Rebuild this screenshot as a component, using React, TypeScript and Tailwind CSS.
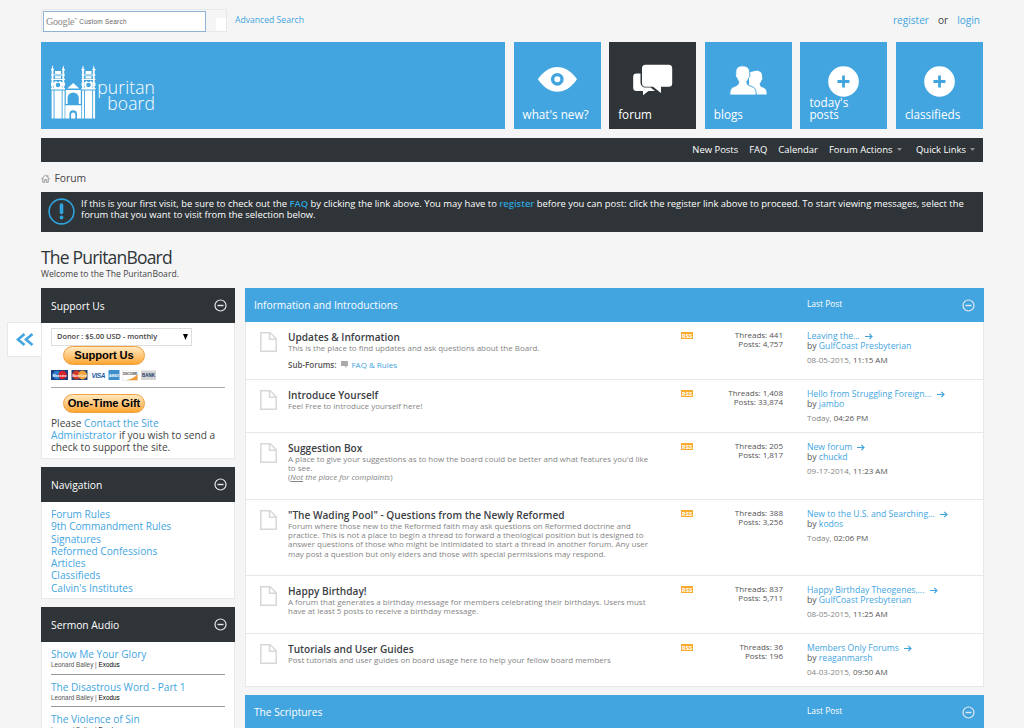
import React from 'react';

interface Forum {
  title: string;
  desc: React.ReactNode;
  sub?: string;
  threads: string;
  posts: string;
  last: string;
  by: string;
  date: string;
  time: string;
  size: string;
}

const forums: Forum[] = [
  { title: 'Updates & Information', desc: 'This is the place to find updates and ask questions about the Board.', sub: 'FAQ & Rules', threads: '441', posts: '4,757', last: 'Leaving the...', by: 'GulfCoast Presbyterian', date: '08-05-2015,', time: '11:15 AM', size: 'h-[58px]' },
  { title: 'Introduce Yourself', desc: 'Feel Free to introduce yourself here!', threads: '1,408', posts: '33,874', last: 'Hello from Struggling Foreign...', by: 'jambo', date: 'Today,', time: '04:26 PM', size: 'h-[53px]' },
  {
    title: 'Suggestion Box',
    desc: (
      <>
        A place to give your suggestions as to how the board could be better and what features you'd like<br />to see.<br />
        (<i><u>Not</u> the place for complaints</i>)
      </>
    ),
    threads: '205', posts: '1,817', last: 'New forum', by: 'chuckd', date: '09-17-2014,', time: '11:23 AM', size: 'h-[67px]',
  },
  {
    title: '"The Wading Pool" - Questions from the Newly Reformed',
    desc: (
      <>
        Forum where those new to the Reformed faith may ask questions on Reformed doctrine and<br />
        practice. This is not a place to begin a thread to forward a theological position but is designed to<br />
        answer questions of those who might be intimidated to start a thread in another forum. Any user<br />
        may post a question but only elders and those with special permissions may respond.
      </>
    ),
    threads: '388', posts: '3,256', last: 'New to the U.S. and Searching...', by: 'kodos', date: 'Today,', time: '02:06 PM', size: 'h-[76px]',
  },
  {
    title: 'Happy Birthday!',
    desc: (
      <>
        A forum that generates a birthday message for members celebrating their birthdays. Users must<br />
        have at least 5 posts to receive a birthday message.
      </>
    ),
    threads: '837', posts: '5,711', last: 'Happy Birthday Theogenes,...', by: 'GulfCoast Presbyterian', date: '08-05-2015,', time: '11:25 AM', size: 'h-[58px]',
  },
  { title: 'Tutorials and User Guides', desc: 'Post tutorials and user guides on board usage here to help your fellow board members', threads: '36', posts: '196', last: 'Members Only Forums', by: 'reaganmarsh', date: '04-03-2015,', time: '09:50 AM', size: 'h-[53px]' },
];

const navLinks = ['Forum Rules', '9th Commandment Rules', 'Signatures', 'Reformed Confessions', 'Articles', 'Classifieds', "Calvin's Institutes"];
const sermons = ['Show Me Your Glory', 'The Disastrous Word - Part 1', 'The Violence of Sin'];

const Collapse = () => (
  <svg width="13" height="13" viewBox="0 0 13 13" fill="none" stroke="#e4eaee">
    <circle cx="6.5" cy="6.5" r="5.5" strokeWidth="1.2" />
    <path d="M3.5 6.5h6" strokeWidth="1.4" />
  </svg>
);

const Arrow = () => (
  <svg className="ml-[3px] inline-block align-[-1px]" width="8" height="7" viewBox="0 0 8 7" fill="none" stroke="#43a5df" strokeWidth="1.2">
    <path d="M0 3.5h7M4.3.8 7 3.5 4.3 6.2" />
  </svg>
);

const Doc = () => (
  <svg width="17" height="20" viewBox="0 0 17 20" fill="none" stroke="#d8d8d8" strokeWidth="1.5">
    <path d="M.8.8h9.4l6 6v12.4H.8zM9.5 1v6.3H16" />
  </svg>
);

const Church = () => (
  <svg width="45" height="55" viewBox="0 0 45 55" fill="#fff">
    {[0, 30.5].map(x => (
      <g key={x} transform={`translate(${x} 0)`}>
        <path d="M1.5 0 2.4 4V24H.6V4zM12.3 0l.9 4V24h-1.8V4z" />
        <path d="M0 4h3v1.3H0zM11 4h3v1.3h-3zM4 6h6v3H4zM0 9.5h14v1H0zM4 11.2h6v2.3H4zM0 14h14v1H0zM4.2 16h1.5v2H4.2zM8.3 16h1.5v2H8.3zM0 17.8h3v3H0zM11 17.8h3v3h-3z" />
        <path d="M3 17h8v6H3zM0 23h14v1.6H0z" />
        <circle cx="7" cy="20" r="2.3" fill="#43a5df" />
        <path d="M.6 25.5h2v28H.6zM3.5 25.5h7.2v28H3.5zM11.6 25.5h2v28h-2z" />
      </g>
    ))}
    <path d="M22.2 18l6.1 5.5h-12z" />
    <path fillRule="evenodd" d="M14.8 25h15v14h-15zm1.8 14h11.2v-6a5.6 5.6 0 0 0-11.2 0z" />
    <path fillRule="evenodd" d="M14.3 40.3h16v13.2H26V49a3.8 3.8 0 0 0-7.6 0v4.5h-4.1z" />
    <path d="M20.1 53.5v-4a2.1 2.1 0 0 1 4.2 0v4z" />
  </svg>
);

const EyeIcon = () => (
  <svg className="absolute left-[23px] top-[24px]" width="41" height="27" viewBox="0 0 41 27">
    <path d="M.8 13.3C7 4.8 13 1 20.3 1S34 4.8 40 13.3C34 21.8 27.5 25.8 20.3 25.8S7 21.8.8 13.3z" fill="#fff" />
    <circle cx="20.3" cy="13.3" r="4.7" fill="none" stroke="#43a5df" strokeWidth="3.4" />
  </svg>
);

const ChatIcon = () => (
  <svg className="absolute left-[24px] top-[22px]" width="41" height="33" viewBox="0 0 41 33" fill="#fff">
    <path d="M3.5 9.5h4V18c0 3.5 2 5.6 5.5 5.6h4.600l4.400 3.400h-6.500L10 31.300V27H3.500A3.300 3.300 0 0 1 .2 23.700V12.800A3.300 3.300 0 0 1 3.500 9.500z" />
    <path d="M12.5.8h23.200a3.500 3.500 0 0 1 3.500 3.500v14.900a3.500 3.500 0 0 1-3.500 3.500H28V29l-8-6.300h-7.500A3.500 3.500 0 0 1 9 19.200V4.300A3.500 3.500 0 0 1 12.500.8z" />
  </svg>
);

const PeopleIcon = () => (
  <svg className="absolute left-[24px] top-[23px]" width="40" height="31" viewBox="0 0 40 31" fill="#fff">
    <path d="M27.5 5.8c4.6 0 6 3 5.6 6.7.6 1 0 2.6-.8 2.900-.3 1.500-.9 2.300-1.600 3 .1 3 1.800 3.500 3.800 4.400 2.400 1 3.200 2.500 3.200 6.800H20V6.800c2 1 4-1 7.500-1z" />
    <path d="M13.5.8c5.6 0 7.600 3.500 7.200 8.400.7 1.200 0 3.200-1 3.700-.4 1.700-1 2.800-1.900 3.600.1 3.600 2.200 4 5 5.100 3.300 1.200 4.400 3 4.400 8.500H.8c0-5.500 1.200-7.300 4.200-8.500 2.800-1.100 4.700-1.500 4.700-5.100-.9-.8-1.500-1.900-1.900-3.600-1-.5-1.600-2.500-1-3.700C6.300 4.300 8 .8 13.500.8z" stroke="#43a5df" strokeWidth="1" />
  </svg>
);

const PlusIcon = () => (
  <svg className="absolute left-[28px] top-[24px]" width="31" height="31" viewBox="0 0 31 31">
    <circle cx="15.5" cy="15.5" r="15.3" fill="#fff" />
    <path d="M15.5 9.5v12M9.5 15.5h12" stroke="#43a5df" strokeWidth="2.8" />
  </svg>
);

function Tile({ label, icon, active }: { label: React.ReactNode; icon: React.ReactNode; active?: boolean }) {
  return (
    <div className={`relative flex h-[87px] w-[87px] items-end pb-[9px] pl-[9px] text-[11.7px] leading-[12px] text-white ${active ? 'bg-[#2e3438]' : 'bg-[#43a5df]'}`}>
      {icon}
      <span className="relative">{label}</span>
    </div>
  );
}

function SideBlock({ title, children, className = '' }: { title: string; children: React.ReactNode; className?: string }) {
  return (
    <section className={`flex flex-col ${className}`}>
      <header className="flex h-[35px] shrink-0 items-center justify-between bg-[#2e3438] pl-[10px] pr-[8px] text-[10.3px] text-white">
        <span className="pt-[2px]">{title}</span>
        <Collapse />
      </header>
      <div className="flex-1 border border-t-0 border-[#e8e8e8] bg-white px-[9px]">{children}</div>
    </section>
  );
}

function CategoryHead({ title }: { title: string }) {
  return (
    <header className="flex h-[34px] items-center bg-[#43a5df] pl-[9px] pr-[9px] text-white">
      <span className="w-[553px] pt-[2px] text-[10.2px]">{title}</span>
      <span className="flex-1 pb-px text-[8.4px]">Last Post</span>
      <Collapse />
    </header>
  );
}

function ForumRow({ forum }: { forum: Forum }) {
  return (
    <div className={`flex border-b border-[#e8e8e8] pl-[14px] pt-[10px] text-[8px] leading-[9.4px] text-[#555] ${forum.size}`}>
      <div className="w-[28px]"><Doc /></div>
      <div className="w-[393px] whitespace-nowrap text-[#858585]">
        <h3 className="-mt-px text-[10.1px] font-semibold leading-[12px] text-[#3b4044]">{forum.title}</h3>
        <p className="-mt-[0.4px] text-[7.97px]">{forum.desc}</p>
        {forum.sub && (
          <p className="mt-[8px] flex items-center text-[#555]">
            <span className="font-semibold">Sub-Forums:</span>
            <svg className="ml-[5px] mr-[3px]" width="7" height="7" viewBox="0 0 7 7" fill="#aaa"><path d="M0 0h7v5H5.5v2l-2-2H0z" /></svg>
            <span className="text-[#43a5df]">{forum.sub}</span>
          </p>
        )}
      </div>
      <div className="w-[12px]">
        <div className="flex h-[7px] items-center justify-center bg-[#fbaa30] text-[6px] font-bold leading-none text-white">RSS</div>
      </div>
      <div className="-mt-[2px] w-[90px] text-right">
        <p>Threads: {forum.threads}</p>
        <p>Posts: {forum.posts}</p>
      </div>
      <div className="-mt-[1.5px] ml-[24px] whitespace-nowrap text-[8.65px] leading-[10px]">
        <p className="text-[#43a5df]">{forum.last} <Arrow /></p>
        <p>by <span className="text-[#43a5df]">{forum.by}</span></p>
        <p className="mt-[4.5px] text-[8px]"><span className="text-[#858585]">{forum.date}</span> {forum.time}</p>
      </div>
    </div>
  );
}

const PayButton = ({ label }: { label: string }) => (
  <div className="ml-[12px] flex h-[19px] w-[82px] items-center justify-center whitespace-nowrap rounded-full border border-[#f0a040] bg-gradient-to-b from-[#ffe9bd] to-[#fda62a] font-['Liberation_Sans',sans-serif] text-[11.2px] font-bold tracking-[-0.1px] text-black">
    {label}
  </div>
);

const Cards = () => (
  <svg className="mt-[5px] block" width="106" height="11" viewBox="0 0 106 11" fontFamily="Liberation Sans, sans-serif" fontWeight="bold">
    <path d="M0 0h17v10H0z" fill="#173f82" />
    <circle cx="6" cy="5" r="4.2" fill="#2b80cc" />
    <circle cx="11.5" cy="5" r="4.2" fill="#d8202a" />
    <text x="1.5" y="6.5" fontSize="4" fill="#fff" textLength="14" lengthAdjust="spacingAndGlyphs">Maestro</text>
    <path d="M20.5 0h16v10h-16z" fill="#26406f" />
    <circle cx="25.5" cy="5" r="4.4" fill="#d33a2c" />
    <circle cx="31.5" cy="5" r="4.4" fill="#f2a23a" />
    <text x="21.5" y="6.5" fontSize="4" fill="#fff" textLength="14" lengthAdjust="spacingAndGlyphs">MasterCard</text>
    <text x="40.5" y="7.5" fontSize="6.5" fontStyle="italic" fill="#1d5aa0" textLength="14">VISA</text>
    <path d="M57.5 0h11v10h-11z" fill="#3b8fca" />
    <text x="58" y="6.5" fontSize="4" fill="#fff" textLength="10" lengthAdjust="spacingAndGlyphs">AMEX</text>
    <path d="M71.5.3h15v10h-15z" fill="#fff" stroke="#ddd" strokeWidth=".5" />
    <path d="M75 10.3c5-1 9-3 11.5-6v6z" fill="#f09a3c" />
    <text x="72" y="4.8" fontSize="4" fill="#333" textLength="14" lengthAdjust="spacingAndGlyphs">DISCOVER</text>
    <path d="M90 .5h15V10H90z" fill="#d4d4d4" />
    <text x="91" y="7" fontSize="5" fill="#223a66" textLength="13" lengthAdjust="spacingAndGlyphs">BANK</text>
  </svg>
);

const Caret = () => (
  <svg className="ml-[4px] inline-block align-[2px]" width="5" height="3" viewBox="0 0 5 3" fill="#8b9094"><path d="M0 0h5L2.5 3z" /></svg>
);

export default function App() {
  return (
    <div className="relative h-[728px] w-[1024px] overflow-hidden bg-[#f5f5f5] pl-[41px] font-['Open_Sans','Noto_Sans',sans-serif] text-[#444]">
      <div className="flex h-[42px] w-[942px] items-start pt-[9px]">
        <div className="flex h-[23px] w-[186px] items-end border border-[#e8e8e8] pl-px">
          <div className="-mb-px flex h-[21px] w-[163px] items-center border border-[#8fb2d6] bg-white pl-[2px] text-[#888]">
            <span className="font-['Liberation_Serif',serif] text-[10px] tracking-[-0.2px]">Google</span>
            <span className="mb-[4px] text-[4px]">™</span>
            <span className="ml-[2px] font-['Liberation_Sans',sans-serif] text-[6.5px] tracking-[0.2px] text-[#666]">Custom Search</span>
          </div>
          <div className="ml-auto h-[13px] w-[10px] bg-white" />
        </div>
        <a className="ml-[8px] mt-[4px] text-[8.65px] leading-[14px] text-[#43a5df]">Advanced Search</a>
        <div className="ml-auto mr-[3px] mt-[4px] flex gap-[9px] text-[10.1px] leading-[14px] text-[#43a5df]">
          <a>register</a>
          <span className="text-[#444]">or</span>
          <a>login</a>
        </div>
      </div>

      <div className="flex w-[942px] justify-between">
        <div className="flex h-[87px] w-[464px] bg-[#43a5df] pl-[10px] pt-[23px] text-white">
          <Church />
          <div className="mt-[14px] w-[59px] text-right text-[17.5px] font-light leading-[16px] tracking-[0.1px]">puritan<br />board</div>
        </div>
        <Tile label="what's new?" icon={<EyeIcon />} />
        <Tile label="forum" icon={<ChatIcon />} active />
        <Tile label="blogs" icon={<PeopleIcon />} />
        <Tile label={<>today's<br />posts</>} icon={<PlusIcon />} />
        <Tile label="classifieds" icon={<PlusIcon />} />
      </div>

      <nav className="mt-[8.5px] flex h-[24.5px] w-[942px] items-center justify-end bg-[#2e3438] pr-[8px] text-[9.45px] text-white">
        <span>New Posts</span>
        <span className="ml-[11px]">FAQ</span>
        <span className="ml-[11px]">Calendar</span>
        <span className="ml-[11px]">Forum Actions<Caret /></span>
        <span className="ml-[14.5px]">Quick Links<Caret /></span>
      </nav>

      <div className="flex h-[29.5px] items-center pt-[3px] text-[10.3px]">
        <svg className="mr-[4.5px]" width="9" height="9" viewBox="0 0 9 9" fill="none" stroke="#999"><path d="M.3 5 4.5 1l4.2 4M1.8 4v4.3h1.9V5.5h1.6v2.8h1.9V4M6.8 1v2" /></svg>
        Forum
      </div>

      <div className="flex h-[40.5px] w-[942px] bg-[#2e3438] pl-[7px] pt-[6px] text-[9.42px] leading-[11px] text-white">
        <svg className="mr-[6px] shrink-0" width="27" height="27" viewBox="0 0 27 27" fill="none" stroke="#2fa3dc">
          <circle cx="13.5" cy="13.5" r="12.4" strokeWidth="1.6" />
          <path d="M13.5 7v7.5" strokeWidth="3.6" strokeLinecap="round" />
          <circle cx="13.5" cy="19.5" r="1.9" fill="#2fa3dc" stroke="none" />
        </svg>
        <p className="whitespace-nowrap">
          If this is your first visit, be sure to check out the <b className="font-semibold text-[#2fa3dc]">FAQ</b> by clicking the link above. You may have to <b className="font-semibold text-[#2fa3dc]">register</b> before you can post: click the register link above to proceed. To start viewing messages, select the<br />
          forum that you want to visit from the selection below.
        </p>
      </div>

      <h1 className="mt-[14px] text-[17.5px] leading-[22px] tracking-[-0.8px] text-[#2e3438]">The PuritanBoard</h1>
      <p className="mb-[8px] mt-px text-[8.6px] leading-[11px]">Welcome to the The PuritanBoard.</p>

      <div className="flex gap-[10px]">
        <aside className="flex w-[194px] flex-col gap-[8px]">
          <SideBlock title="Support Us" className="h-[171px]">
            <div className="mt-[5px] flex h-[18px] w-[141px] items-center justify-between border border-[#ddd] pl-[5px] pr-[3px] text-[7.4px] font-semibold text-[#444]">
              Donor : $5.00 USD - monthly
              <svg width="5" height="6" viewBox="0 0 5 6"><path d="M0 0h5L2.5 6z" /></svg>
            </div>
            <PayButton label="Support Us" />
            <Cards />
            <hr className="mb-[6px] mt-[6px] border-[#aaa]" />
            <PayButton label="One-Time Gift" />
            <p className="mt-[4px] whitespace-nowrap text-[10.15px] leading-[12.2px]">
              Please <a className="text-[#43a5df]">Contact the Site<br />Administrator</a> if you wish to send a<br />check to support the site.
            </p>
          </SideBlock>
          <SideBlock title="Navigation" className="h-[132px]">
            <ul className="pt-[6px] text-[10.1px] leading-[12.25px] text-[#43a5df]">
              {navLinks.map(link => <li key={link}>{link}</li>)}
            </ul>
          </SideBlock>
          <SideBlock title="Sermon Audio" className="h-[150px]">
            {sermons.map(sermon => (
              <div key={sermon} className="h-[32.5px] border-b border-[#999] pt-[6px]">
                <div className="text-[10.1px] leading-[13px] text-[#43a5df]">{sermon}</div>
                <div className="font-['Liberation_Sans',sans-serif] text-[6.35px] leading-[8px] text-[#555]">Leonard Bailey | <span className="text-black">Exodus</span></div>
              </div>
            ))}
          </SideBlock>
        </aside>

        <main className="w-[739px]">
          <CategoryHead title="Information and Introductions" />
          <div className="mb-[8px] border-x border-[#e8e8e8] bg-white">
            {forums.map(forum => <ForumRow key={forum.title} forum={forum} />)}
          </div>
          <CategoryHead title="The Scriptures" />
        </main>
      </div>

      <div className="absolute left-[7px] top-[322px] flex h-[35px] w-[34px] items-center justify-center border border-r-0 border-[#e8e8e8] bg-white">
        <svg width="18" height="13" viewBox="0 0 18 13" fill="none" stroke="#43a5df" strokeWidth="2.6"><path d="M8.5 1 2 6.5 8.5 12M16.5 1 10 6.5l6.5 5.5" /></svg>
      </div>
    </div>
  );
}
